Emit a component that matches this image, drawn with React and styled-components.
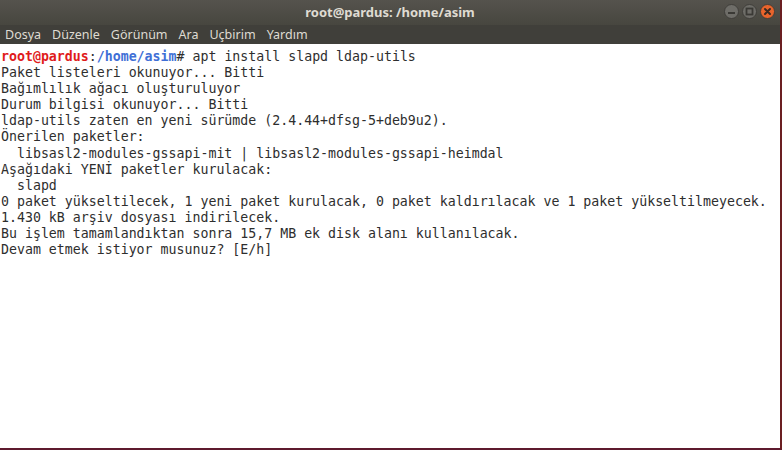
import React from "react";
import styled, { createGlobalStyle } from "styled-components";

const Global = createGlobalStyle`
  html, body {
    margin: 0;
    padding: 0;
    height: 450px;
    overflow: hidden;
    background: #5e2750;
  }
  #root {
    height: 450px;
  }
`;

const Window = styled.div`
  display: flex;
  flex-direction: column;
  width: 780px;
  height: 448px;
  border-right: 2px solid #6b1f22;
  border-bottom: 2px solid #5e1a2e;
`;

const TitleBar = styled.div`
  position: relative;
  height: 25px;
  display: flex;
  align-items: center;
  justify-content: center;
  padding-bottom: 2px;
  box-sizing: border-box;
  background: linear-gradient(#55534d, #47463f);
  font-family: "Noto Sans", "DejaVu Sans", sans-serif;
  font-weight: 700;
  font-size: 13px;
  color: #dfdbd2;
`;

const Controls = styled.div`
  position: absolute;
  right: 5px;
  top: 4px;
  display: flex;
  gap: 3px;
`;

const MenuBar = styled.div`
  height: 19px;
  display: flex;
  align-items: center;
  gap: 11px;
  padding-left: 5px;
  background: #403f3a;
  font-family: "Noto Sans", "DejaVu Sans", sans-serif;
  font-size: 12.5px;
  color: #dfdbd2;
`;

const Terminal = styled.div`
  flex: 1;
  background: #ffffff;
  padding: 5px 0 0 1px;
  font-family: "DejaVu Sans Mono", "Liberation Mono", monospace;
  font-size: 13.25px;
  line-height: 16.1px;
  color: #2e2e2e;
  white-space: pre;
`;

const Host = styled.span`
  color: #e01b1b;
  font-weight: 700;
`;

const Path = styled.span`
  color: #3f6fd6;
  font-weight: 700;
`;

function Circle({ fill, children }) {
  return (
    <svg width="15" height="15" viewBox="0 0 15 15">
      <circle cx="7.5" cy="7.5" r="7" fill={fill} stroke="#3a3935" strokeWidth="0.8" />
      {children}
    </svg>
  );
}

const menus = ["Dosya", "Düzenle", "Görünüm", "Ara", "Uçbirim", "Yardım"];

const lines = [
  "Paket listeleri okunuyor... Bitti",
  "Bağımlılık ağacı oluşturuluyor",
  "Durum bilgisi okunuyor... Bitti",
  "ldap-utils zaten en yeni sürümde (2.4.44+dfsg-5+deb9u2).",
  "Önerilen paketler:",
  "  libsasl2-modules-gssapi-mit | libsasl2-modules-gssapi-heimdal",
  "Aşağıdaki YENİ paketler kurulacak:",
  "  slapd",
  "0 paket yükseltilecek, 1 yeni paket kurulacak, 0 paket kaldırılacak ve 1 paket yükseltilmeyecek.",
  "1.430 kB arşiv dosyası indirilecek.",
  "Bu işlem tamamlandıktan sonra 15,7 MB ek disk alanı kullanılacak.",
  "Devam etmek istiyor musunuz? [E/h]",
];

export default function App() {
  return (
    <>
      <Global />
      <Window>
        <TitleBar>
          root@pardus: /home/asim
          <Controls>
            <Circle fill="#6e6d68">
              <rect x="4" y="8" width="7" height="2" fill="#3a3935" />
            </Circle>
            <Circle fill="#6e6d68">
              <rect x="4.5" y="4.5" width="6" height="6" fill="none" stroke="#3a3935" strokeWidth="1.8" />
            </Circle>
            <Circle fill="#e8642c">
              <path d="M5 5 L10 10 M10 5 L5 10" stroke="#3a2a22" strokeWidth="2" strokeLinecap="round" />
            </Circle>
          </Controls>
        </TitleBar>
        <MenuBar>
          {menus.map((m) => (
            <span key={m}>{m}</span>
          ))}
        </MenuBar>
        <Terminal>
          <Host>root@pardus</Host>:<Path>/home/asim</Path># apt install slapd ldap-utils
          {"\n"}
          {lines.join("\n")}
        </Terminal>
      </Window>
    </>
  );
}
